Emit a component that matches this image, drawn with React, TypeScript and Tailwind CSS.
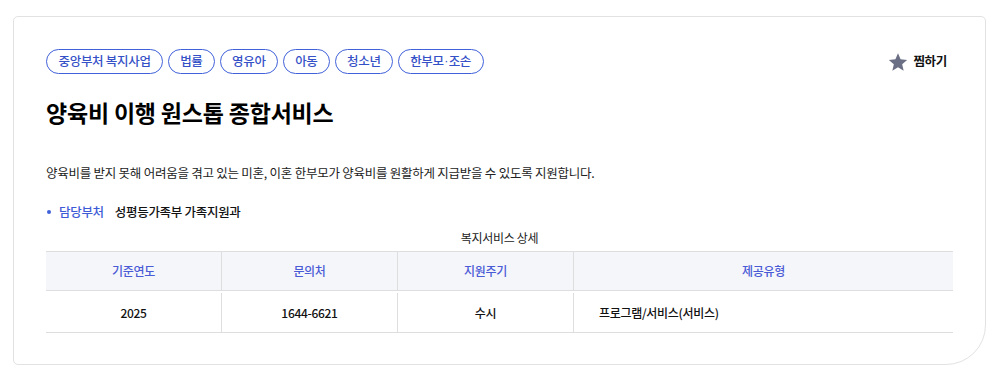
import React from 'react';

const tags = ['중앙부처 복지사업', '법률', '영유아', '아동', '청소년'];

const columns = [
  { head: '기준연도', value: '2025', w: 'w-[176px]', align: 'text-center' },
  { head: '문의처', value: '1644-6621', w: 'w-[176px]', align: 'text-center' },
  { head: '지원주기', value: '수시', w: 'w-[176px]', align: 'text-center' },
  { head: '제공유형', value: '프로그램/서비스(서비스)', w: 'flex-1', align: 'text-left pl-[25px]' },
];

const tagClass =
  'h-[25px] px-[11.5px] flex items-center rounded-full border border-[#4061d9] text-[#3551c7] text-[12.5px] font-medium leading-none tracking-[-0.3px]';

const App: React.FC = () => {
  return (
    <div
      className="w-[998px] h-[377px] bg-white pt-4 pl-[13px]"
      style={{ fontFamily: '"Noto Sans CJK KR", "Noto Sans", sans-serif' }}
    >
      <div className="w-[973px] h-[349px] border border-[#e2e2e2] rounded-tl-[5px] rounded-tr-[5px] rounded-bl-[5px] rounded-br-[40px] px-8 pt-8">
        <div className="flex items-center justify-between">
          <div className="flex gap-[4.5px]">
            {tags.map((t) => (
              <span key={t} className={tagClass}>
                {t}
              </span>
            ))}
            <span className={tagClass}>
              한부모<span className="font-['Liberation_Sans',sans-serif] mx-[0.5px]">·</span>조손
            </span>
          </div>
          <button className="flex items-center gap-[5px] mr-[6px] text-[12.5px] font-bold text-[#111] tracking-[-0.3px]">
            <svg width="20" height="20" viewBox="0 0 24 24" fill="#6b6f85">
              <path d="M12 1.5l3.1 7.3 7.9.7-6 5.2 1.8 7.8L12 18.4l-6.8 4.1 1.8-7.8-6-5.2 7.9-.7z" />
            </svg>
            찜하기
          </button>
        </div>

        <h1 className="mt-[22px] text-[23px] font-bold text-black tracking-[-0.2px] leading-[32px]">
          양육비 이행 원스톱 종합서비스
        </h1>

        <p className="mt-[35px] text-[12.5px] text-[#222] tracking-[-0.25px] leading-[20px]">
          양육비를 받지 못해 어려움을 겪고 있는 미혼, 이혼 한부모가 양육비를 원활하게 지급받을 수 있도록 지원합니다.
        </p>

        <div className="mt-[19px] flex items-center text-[12.5px] tracking-[-0.3px] leading-[20px]">
          <span className="w-[4px] h-[4px] rounded-full bg-[#4061d9] ml-[1px] mr-[8px]" />
          <span className="text-[#3d5bd6] font-medium mr-[11px]">담당부처</span>
          <span className="text-[#111] font-medium">성평등가족부 가족지원과</span>
        </div>

        <div className="mt-[8px] text-center text-[12px] text-[#222] tracking-[-0.3px] leading-[16px]">
          복지서비스 상세
        </div>

        <div className="mt-[5px] border-t border-b border-[#dedede]">
          <div className="flex bg-[#f5f6fa] border-b border-[#dedede] h-[39px]">
            {columns.map((c, i) => (
              <div
                key={c.head}
                className={`${c.w} flex items-center justify-center text-[12px] text-[#4a5bd6] font-medium tracking-[-0.3px] ${i < 3 ? 'border-r border-[#dedede]' : ''}`}
              >
                {c.head}
              </div>
            ))}
          </div>
          <div className="flex h-[41px] pt-[2px]">
            {columns.map((c, i) => (
              <div
                key={c.head}
                className={`${c.w} ${c.align} flex items-center ${i < 3 ? 'justify-center border-r border-[#dedede]' : ''} text-[12px] font-medium text-[#111] tracking-[-0.3px]`}
              >
                {c.value}
              </div>
            ))}
          </div>
        </div>
      </div>
    </div>
  );
};

export default App;
